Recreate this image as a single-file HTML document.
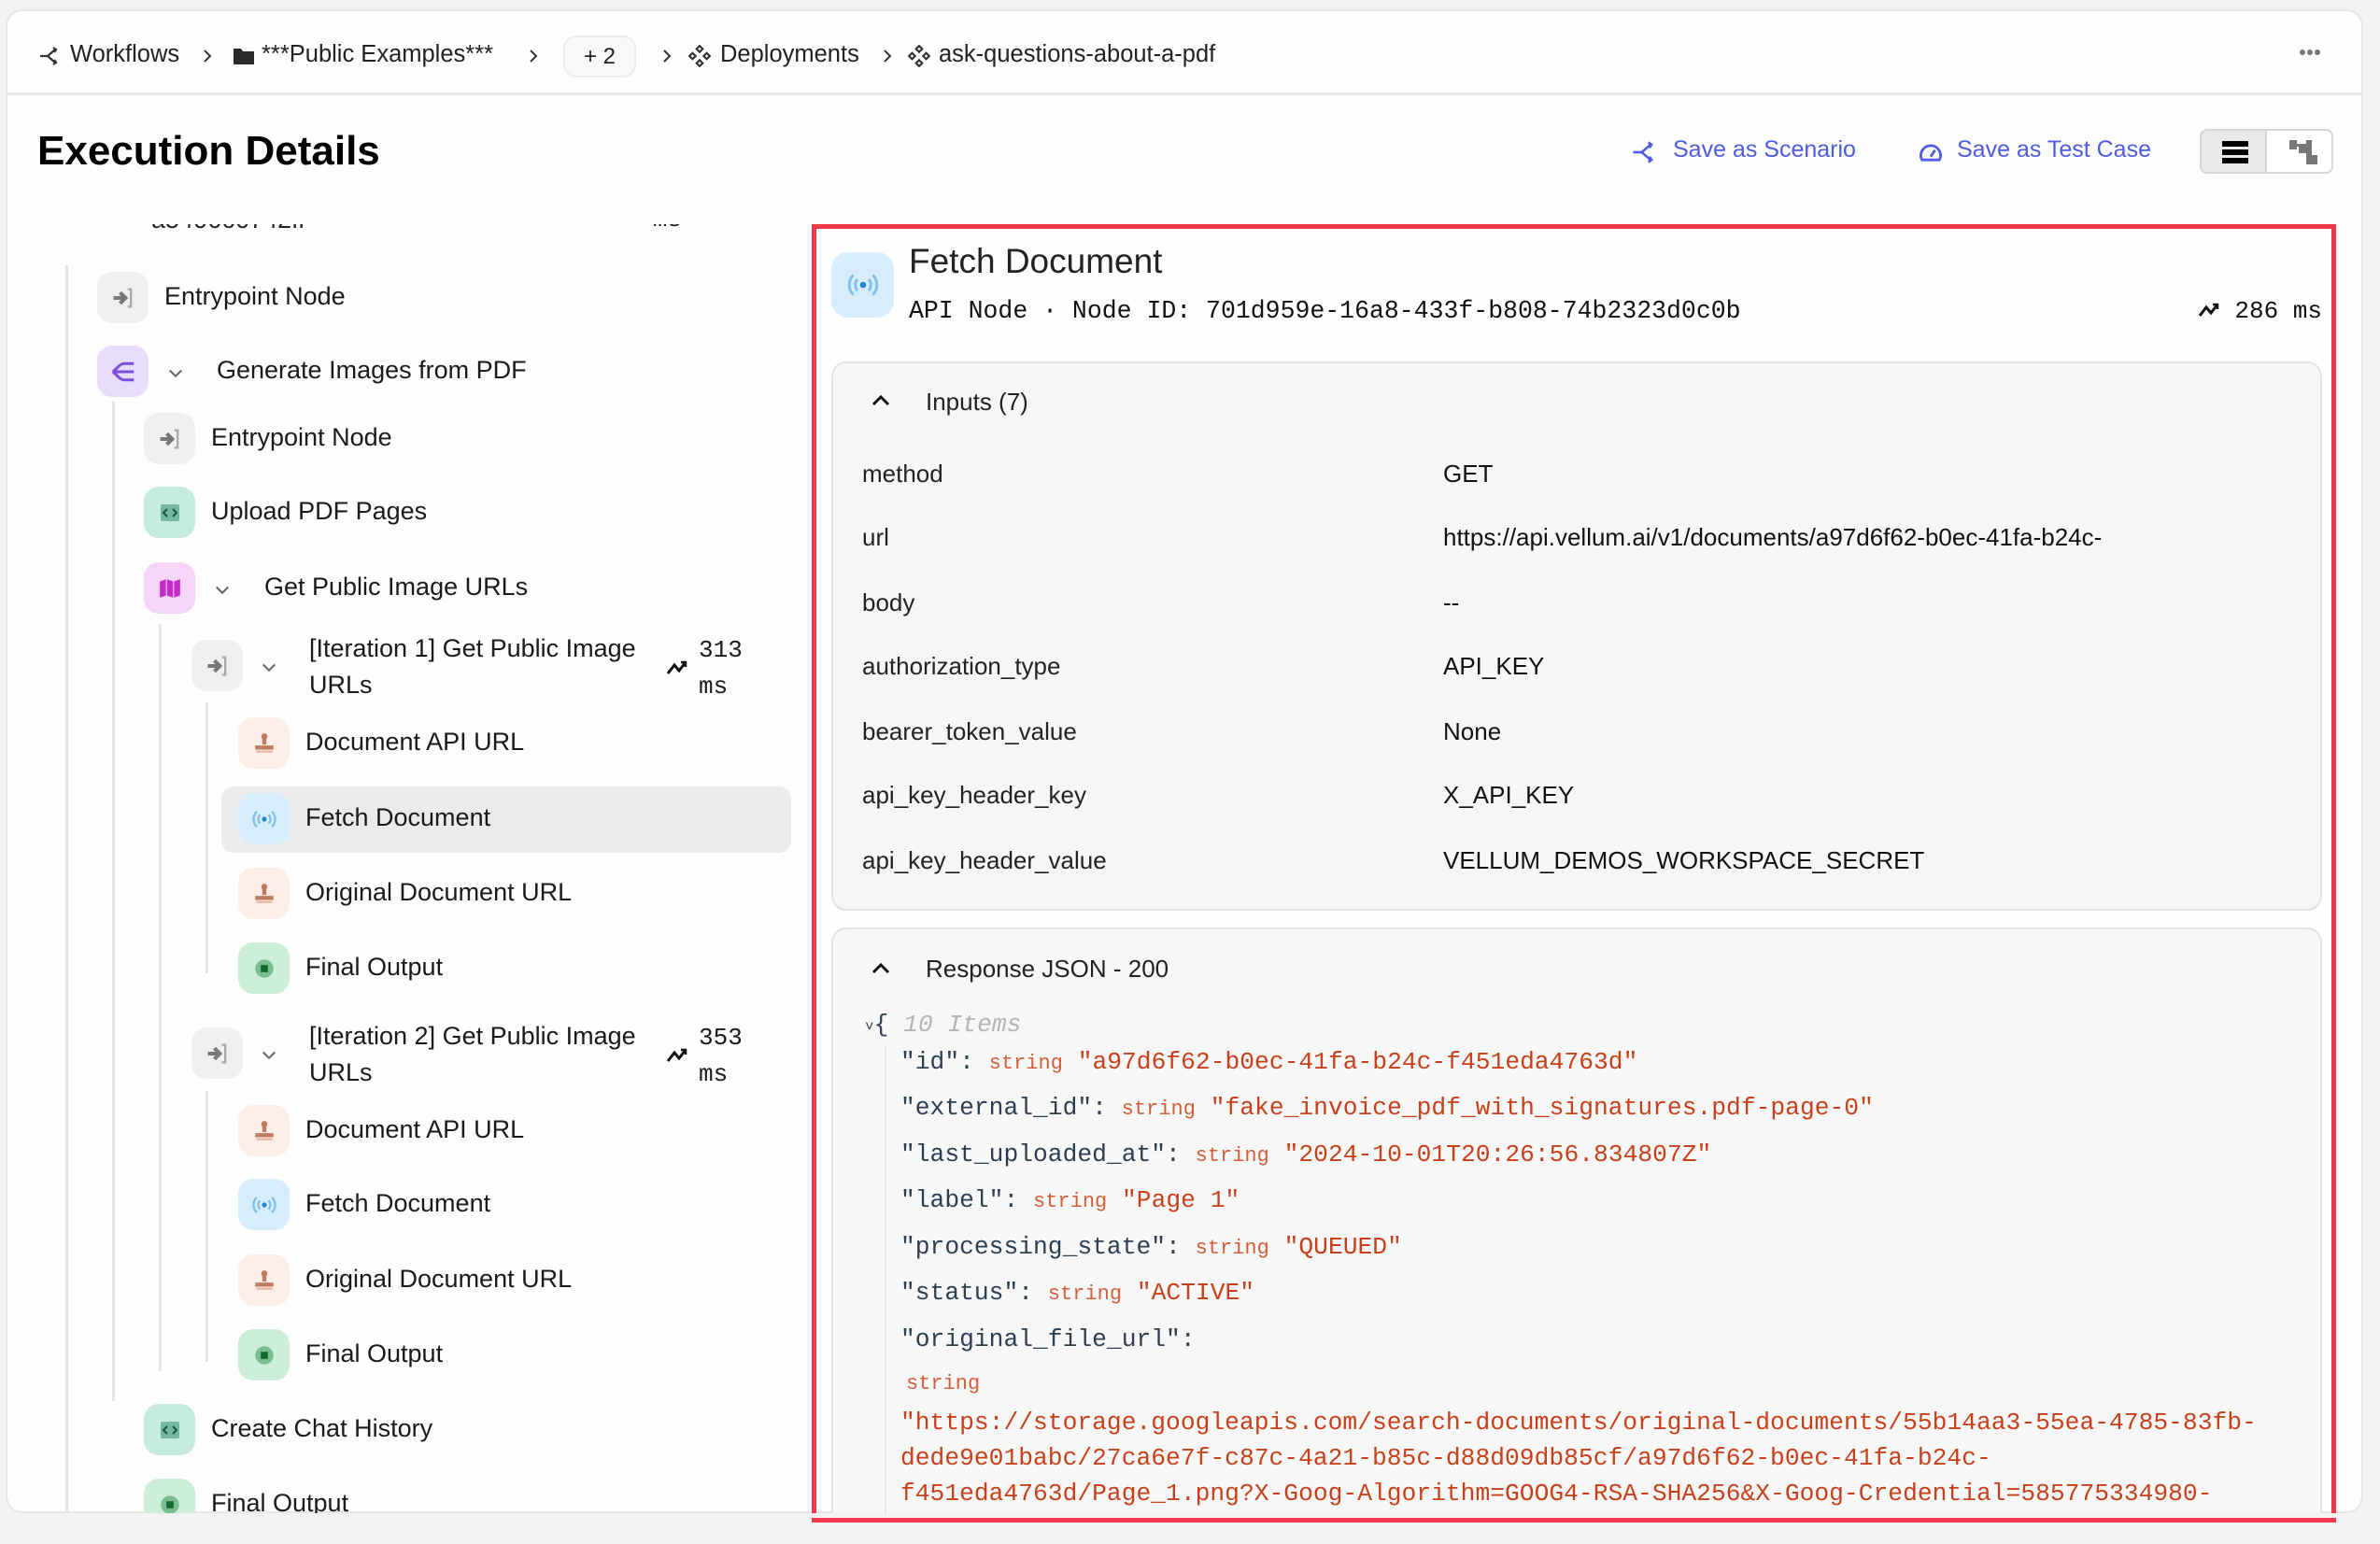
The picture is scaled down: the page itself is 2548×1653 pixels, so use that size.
<!DOCTYPE html>
<html><head><meta charset="utf-8">
<style>
*{box-sizing:border-box;margin:0;padding:0}
body{width:2548px;height:1638px;background:#f2f2f2;font-family:"Liberation Sans",sans-serif;color:#1a1a1a;position:relative;overflow:hidden}
.card{position:absolute;left:6px;top:10px;width:2524px;height:1610px;background:#fdfdfd;border:2px solid #e6e6e6;border-radius:18px;overflow:hidden}
.a{position:absolute;white-space:nowrap}
.bc{font-size:25.5px;color:#222;top:42px}
.ic{position:absolute;width:55px;height:55px;border-radius:16px;display:flex;align-items:center;justify-content:center}
.t{position:absolute;font-size:27px;color:#1a1a1a;white-space:nowrap}
.ms{position:absolute;font-family:"Liberation Mono",monospace;font-size:26px;color:#1a1a1a;white-space:nowrap;right:1718px;text-align:right}
.vl{position:absolute;width:3px;background:#e3e3e3}
.gray{background:#efefef}.pur{background:#e9ddfc}.teal{background:#c6ece1}.pink{background:#f7d5f8}.peach{background:#fcede7}.blue{background:#d7edfc}.green{background:#cdefd9}
.k{position:absolute;left:923px;font-size:26px;color:#222}
.v{position:absolute;left:1545px;font-size:26px;color:#111}
.j{position:absolute;font-family:"Liberation Mono",monospace;font-size:26.3px;color:#2c3e50;white-space:nowrap}
.ty{font-size:22px;color:#d35f3a}
.sv{color:#c7401a}
</style></head><body>
<svg width="0" height="0" style="position:absolute">
<defs>
<symbol id="trend" viewBox="0 0 24 24"><polyline points="2,19 9,10 14,16 21,7" fill="none" stroke="#111" stroke-width="3"/><polyline points="16,7 21,7 21,12" fill="none" stroke="#111" stroke-width="2.5"/></symbol>
<symbol id="chv" viewBox="0 0 16 16"><polyline points="3,6 8,11 13,6" fill="none" stroke="#666" stroke-width="1.6"/></symbol>
<symbol id="entry" viewBox="0 0 24 24"><path d="M3 12h9M9 7l5 5-5 5" fill="none" stroke="#777" stroke-width="3.5"/><path d="M16 4h3v16h-3" fill="none" stroke="#aaa" stroke-width="2"/></symbol>
<symbol id="gen" viewBox="0 0 24 24"><path d="M21 5h-8c-4 0-6 4-10 7M21 12H5M21 19h-8c-4 0-6-4-10-7" fill="none" stroke="#7c4ddb" stroke-width="2.4"/></symbol>
<symbol id="code" viewBox="0 0 24 24"><rect x="2" y="3" width="20" height="18" rx="2" fill="#75b79f"/><path d="M9 8l-4 4 4 4M15 8l4 4-4 4" fill="none" stroke="#0d5a3e" stroke-width="2"/></symbol>
<symbol id="map" viewBox="0 0 24 24"><path d="M2 5l6-2v16l-6 2zM9 3l6 2v16l-6-2zM16 5l6-2v16l-6 2z" fill="#c42cc9"/></symbol>
<symbol id="stamp" viewBox="0 0 24 24"><circle cx="12" cy="5" r="3" fill="#c07a5e"/><path d="M10 7h4v6h-4z" fill="#c07a5e"/><path d="M3 14h18v4H3z" fill="#c07a5e"/><rect x="4" y="19" width="16" height="2" fill="#e4b6a4"/></symbol>
<symbol id="api" viewBox="0 0 24 24"><circle cx="12" cy="12" r="2.2" fill="#1b87d6"/><path d="M8 8a6 6 0 0 0 0 8M16 8a6 6 0 0 1 0 8M5 5a10 10 0 0 0 0 14M19 5a10 10 0 0 1 0 14" fill="none" stroke="#7fc0ec" stroke-width="2"/></symbol>
<symbol id="fin" viewBox="0 0 24 24"><circle cx="12" cy="12" r="9" fill="#7bbd92"/><rect x="8.5" y="8.5" width="7" height="7" fill="#0f6a2c"/></symbol>
</defs></svg>

<div class="card">
<svg class="a" style="left:33px;top:36px" width="24" height="24" viewBox="0 0 24 24"><path d="M2 12h8M10 12l8-7M10 12l8 7M16 3l3 2-2 3M16 21l3-2-2-3" fill="none" stroke="#333" stroke-width="2.2"/></svg>
<div class="a bc" style="left:67px;top:32px">Workflows</div>
<svg class="a" style="left:206px;top:38px" width="16" height="20" viewBox="0 0 16 20"><polyline points="5,4 11,10 5,16" fill="none" stroke="#333" stroke-width="2"/></svg>
<svg class="a" style="left:241px;top:37px" width="24" height="22" viewBox="0 0 24 22"><path d="M1 3h8l2 3h12v14H1z" fill="#2a2a2a"/></svg>
<div class="a bc" style="left:272px;top:32px">***Public Examples***</div>
<svg class="a" style="left:555px;top:38px" width="16" height="20" viewBox="0 0 16 20"><polyline points="5,4 11,10 5,16" fill="none" stroke="#333" stroke-width="2"/></svg>
<div class="a" style="left:595px;top:26px;width:78px;height:45px;border:2px solid #ececec;background:#f8f8f8;border-radius:14px;font-size:24px;text-align:center;line-height:41px;color:#222">+ 2</div>
<svg class="a" style="left:698px;top:38px" width="16" height="20" viewBox="0 0 16 20"><polyline points="5,4 11,10 5,16" fill="none" stroke="#333" stroke-width="2"/></svg>
<svg class="a" style="left:728px;top:35px" width="26" height="26" viewBox="0 0 24 24"><path d="M12 2l3 3-3 3-3-3zM12 16l3 3-3 3-3-3zM2 12l3-3 3 3-3 3zM16 12l3-3 3 3-3 3z" fill="none" stroke="#333" stroke-width="2"/></svg>
<div class="a bc" style="left:763px;top:32px">Deployments</div>
<svg class="a" style="left:934px;top:38px" width="16" height="20" viewBox="0 0 16 20"><polyline points="5,4 11,10 5,16" fill="none" stroke="#333" stroke-width="2"/></svg>
<svg class="a" style="left:963px;top:35px" width="26" height="26" viewBox="0 0 24 24"><path d="M12 2l3 3-3 3-3-3zM12 16l3 3-3 3-3-3zM2 12l3-3 3 3-3 3zM16 12l3-3 3 3-3 3z" fill="none" stroke="#333" stroke-width="2"/></svg>
<div class="a bc" style="left:997px;top:32px">ask-questions-about-a-pdf</div>
<svg class="a" style="left:2453px;top:40px" width="24" height="8"><circle cx="4" cy="4" r="3" fill="#777"/><circle cx="12" cy="4" r="3" fill="#777"/><circle cx="20" cy="4" r="3" fill="#777"/></svg>
<div class="a" style="left:0;top:87px;width:2524px;height:3px;background:#e6e6e6"></div>

<div class="a" style="left:32px;top:125px;font-size:44px;font-weight:bold;color:#000">Execution Details</div>

<svg class="a" style="left:1738px;top:137px" width="28" height="28" viewBox="0 0 24 24"><path d="M2 12h8M10 12l8-7M10 12l8 7M16 3l3 2-2 3M16 21l3-2-2-3" fill="none" stroke="#4f5be0" stroke-width="2.2"/></svg>
<div class="a" style="left:1783px;top:134px;font-size:25px;color:#4f5be0">Save as Scenario</div>
<svg class="a" style="left:2045px;top:137px" width="28" height="28" viewBox="0 0 24 24"><path d="M4 19a9 9 0 1 1 16 0z" fill="none" stroke="#4f5be0" stroke-width="2.4"/><path d="M12 16l4-6" stroke="#4f5be0" stroke-width="2.4"/></svg>
<div class="a" style="left:2087px;top:134px;font-size:25px;color:#4f5be0">Save as Test Case</div>
<div class="a" style="left:2347px;top:126px;width:143px;height:48px;border:2px solid #d6d6d6;border-radius:8px;overflow:hidden;background:#fff">
 <div style="position:absolute;left:0;top:0;width:70px;height:46px;background:#e9e9e9;border-right:2px solid #d6d6d6"></div>
 <svg style="position:absolute;left:22px;top:10px" width="28" height="26"><rect x="0" y="1" width="28" height="6" fill="#000"/><rect x="0" y="10" width="28" height="6" fill="#000"/><rect x="0" y="19" width="28" height="6" fill="#000"/></svg>
 <svg style="position:absolute;left:94px;top:10px" width="30" height="28" viewBox="0 0 30 28"><rect x="0" y="0" width="8" height="10" fill="#777"/><rect x="10" y="6" width="8" height="8" fill="#777"/><rect x="18" y="0" width="6" height="24" fill="#777"/><rect x="18" y="16" width="12" height="10" fill="#777"/><rect x="6" y="4" width="14" height="3" fill="#777"/></svg>
</div>
</div>

<div class="a" style="left:6px;top:240px;width:854px;height:1380px;overflow:hidden">
<div class="a" style="left:-6px;top:-240px;width:860px;height:1620px">
 <div class="t" style="left:162px;top:220px;color:#222">a540660742ff</div>
 <div class="ms" style="right:130px;top:220px;">ms</div>
 <div class="vl" style="left:70px;top:284px;height:1340px"></div>
 <div class="vl" style="left:120px;top:430px;height:1070px"></div>
 <div class="vl" style="left:170px;top:668px;height:800px"></div>
 <div class="vl" style="left:220px;top:752px;height:290px"></div>
 <div class="vl" style="left:220px;top:1168px;height:290px"></div>

 <div class="ic gray" style="left:104px;top:291px"><svg width="28" height="28"><use href="#entry"/></svg></div>
 <div class="t" style="left:176px;top:302px">Entrypoint Node</div>
 <div class="ms" style="top:303px"><svg width="24" height="24" style="vertical-align:-3px"><use href="#trend"/></svg> 0 ms</div>

 <div class="ic pur" style="left:104px;top:370px"><svg width="30" height="30"><use href="#gen"/></svg></div>
 <svg class="a" style="left:178px;top:389px" width="20" height="20"><use href="#chv"/></svg>
 <div class="t" style="left:232px;top:381px">Generate Images from PDF</div>
 <div class="ms" style="top:382px"><svg width="24" height="24" style="vertical-align:-3px"><use href="#trend"/></svg> 5262 ms</div>

 <div class="ic gray" style="left:154px;top:442px"><svg width="28" height="28"><use href="#entry"/></svg></div>
 <div class="t" style="left:226px;top:453px">Entrypoint Node</div>
 <div class="ms" style="top:454px"><svg width="24" height="24" style="vertical-align:-3px"><use href="#trend"/></svg> 0 ms</div>

 <div class="ic teal" style="left:154px;top:521px"><svg width="24" height="24"><use href="#code"/></svg></div>
 <div class="t" style="left:226px;top:532px">Upload PDF Pages</div>
 <div class="ms" style="top:533px"><svg width="24" height="24" style="vertical-align:-3px"><use href="#trend"/></svg> 3701 ms</div>

 <div class="ic pink" style="left:154px;top:602px"><svg width="26" height="26"><use href="#map"/></svg></div>
 <svg class="a" style="left:228px;top:621px" width="20" height="20"><use href="#chv"/></svg>
 <div class="t" style="left:283px;top:613px">Get Public Image URLs</div>
 <div class="ms" style="top:614px"><svg width="24" height="24" style="vertical-align:-3px"><use href="#trend"/></svg> 411 ms</div>

 <div class="ic gray" style="left:205px;top:685px"><svg width="28" height="28"><use href="#entry"/></svg></div>
 <svg class="a" style="left:278px;top:704px" width="20" height="20"><use href="#chv"/></svg>
 <div class="t" style="left:331px;top:675px;line-height:39px;white-space:normal;width:380px">[Iteration 1] Get Public Image URLs</div>
 <svg class="a" style="left:713px;top:702px" width="24" height="24"><use href="#trend"/></svg>
 <div class="ms" style="left:748px;right:auto;top:677px;line-height:39px;text-align:left">313<br>ms</div>

 <div class="ic peach" style="left:255px;top:768px"><svg width="26" height="26"><use href="#stamp"/></svg></div>
 <div class="t" style="left:327px;top:779px">Document API URL</div>
 <div class="ms" style="top:780px"><svg width="24" height="24" style="vertical-align:-3px"><use href="#trend"/></svg> 1 ms</div>

 <div class="a" style="left:237px;top:842px;width:610px;height:71px;background:#ebebeb;border-radius:13px"></div>
 <div class="ic blue" style="left:255px;top:849px"><svg width="28" height="28"><use href="#api"/></svg></div>
 <div class="t" style="left:327px;top:860px">Fetch Document</div>
 <div class="ms" style="top:861px"><svg width="24" height="24" style="vertical-align:-3px"><use href="#trend"/></svg> 286 ms</div>

 <div class="ic peach" style="left:255px;top:929px"><svg width="26" height="26"><use href="#stamp"/></svg></div>
 <div class="t" style="left:327px;top:940px">Original Document URL</div>
 <div class="ms" style="top:941px"><svg width="24" height="24" style="vertical-align:-3px"><use href="#trend"/></svg> 1 ms</div>

 <div class="ic green" style="left:255px;top:1009px"><svg width="26" height="26"><use href="#fin"/></svg></div>
 <div class="t" style="left:327px;top:1020px">Final Output</div>
 <div class="ms" style="top:1021px"><svg width="24" height="24" style="vertical-align:-3px"><use href="#trend"/></svg> 1 ms</div>

 <div class="ic gray" style="left:205px;top:1100px"><svg width="28" height="28"><use href="#entry"/></svg></div>
 <svg class="a" style="left:278px;top:1119px" width="20" height="20"><use href="#chv"/></svg>
 <div class="t" style="left:331px;top:1090px;line-height:39px;white-space:normal;width:380px">[Iteration 2] Get Public Image URLs</div>
 <svg class="a" style="left:713px;top:1117px" width="24" height="24"><use href="#trend"/></svg>
 <div class="ms" style="left:748px;right:auto;top:1092px;line-height:39px;text-align:left">353<br>ms</div>

 <div class="ic peach" style="left:255px;top:1183px"><svg width="26" height="26"><use href="#stamp"/></svg></div>
 <div class="t" style="left:327px;top:1194px">Document API URL</div>
 <div class="ms" style="top:1195px"><svg width="24" height="24" style="vertical-align:-3px"><use href="#trend"/></svg> 1 ms</div>

 <div class="ic blue" style="left:255px;top:1262px"><svg width="28" height="28"><use href="#api"/></svg></div>
 <div class="t" style="left:327px;top:1273px">Fetch Document</div>
 <div class="ms" style="top:1274px"><svg width="24" height="24" style="vertical-align:-3px"><use href="#trend"/></svg> 305 ms</div>

 <div class="ic peach" style="left:255px;top:1343px"><svg width="26" height="26"><use href="#stamp"/></svg></div>
 <div class="t" style="left:327px;top:1354px">Original Document URL</div>
 <div class="ms" style="top:1355px"><svg width="24" height="24" style="vertical-align:-3px"><use href="#trend"/></svg> 1 ms</div>

 <div class="ic green" style="left:255px;top:1423px"><svg width="26" height="26"><use href="#fin"/></svg></div>
 <div class="t" style="left:327px;top:1434px">Final Output</div>
 <div class="ms" style="top:1435px"><svg width="24" height="24" style="vertical-align:-3px"><use href="#trend"/></svg> 0 ms</div>

 <div class="ic teal" style="left:154px;top:1503px"><svg width="24" height="24"><use href="#code"/></svg></div>
 <div class="t" style="left:226px;top:1514px">Create Chat History</div>
 <div class="ms" style="top:1515px"><svg width="24" height="24" style="vertical-align:-3px"><use href="#trend"/></svg> 954 ms</div>

 <div class="ic green" style="left:154px;top:1583px"><svg width="26" height="26"><use href="#fin"/></svg></div>
 <div class="t" style="left:226px;top:1594px">Final Output</div>
 <div class="ms" style="top:1595px"><svg width="24" height="24" style="vertical-align:-3px"><use href="#trend"/></svg> 0 ms</div>
</div>
</div>

<div class="a" style="left:869px;top:240px;width:1632px;height:1392px;border:5px solid #f43a4a"></div>
<div class="a" style="left:874px;top:245px;width:1622px;height:1375px;overflow:hidden">
 <div class="ic blue" style="left:16px;top:25px;width:67px;height:70px;border-radius:18px"><svg width="36" height="36"><use href="#api"/></svg></div>
 <div class="a" style="left:99px;top:14px;font-size:37px;color:#222">Fetch Document</div>
 <div class="a" style="left:99px;top:73px;font-family:'Liberation Mono',monospace;font-size:26.5px;color:#111">API Node · Node ID: 701d959e-16a8-433f-b808-74b2323d0c0b</div>
 <div class="a" style="right:10px;top:73px;font-family:'Liberation Mono',monospace;font-size:26px;color:#111"><svg width="24" height="24" style="vertical-align:-3px"><use href="#trend"/></svg> 286 ms</div>

 <div class="a" style="left:16px;top:142px;width:1596px;height:588px;background:#f6f6f6;border:2px solid #e2e2e2;border-radius:16px"></div>
 <svg class="a" style="left:58px;top:176px" width="22" height="16"><polyline points="3,12 11,4 19,12" fill="none" stroke="#111" stroke-width="3"/></svg>
 <div class="a" style="left:117px;top:170px;font-size:26px;color:#222">Inputs (7)</div>
</div>
<div class="k" style="top:492px">method</div><div class="v" style="top:492px">GET</div>
<div class="k" style="top:560px">url</div><div class="v" style="top:560px">https://api.vellum.ai/v1/documents/a97d6f62-b0ec-41fa-b24c-</div>
<div class="k" style="top:630px">body</div><div class="v" style="top:630px">--</div>
<div class="k" style="top:698px">authorization_type</div><div class="v" style="top:698px">API_KEY</div>
<div class="k" style="top:768px">bearer_token_value</div><div class="v" style="top:768px">None</div>
<div class="k" style="top:836px">api_key_header_key</div><div class="v" style="top:836px">X_API_KEY</div>
<div class="k" style="top:906px">api_key_header_value</div><div class="v" style="top:906px">VELLUM_DEMOS_WORKSPACE_SECRET</div>

<div class="a" style="left:890px;top:993px;width:1596px;height:660px;background:#f7f7f7;border:2px solid #e2e2e2;border-radius:16px;clip-path:inset(0 0 33px 0)"></div>
<svg class="a" style="left:932px;top:1029px" width="22" height="16"><polyline points="3,12 11,4 19,12" fill="none" stroke="#111" stroke-width="3"/></svg>
<div class="a" style="left:991px;top:1022px;font-size:26px;color:#222">Response JSON - 200</div>
<div class="a" style="left:947px;top:1120px;width:2px;height:500px;background:#e8e8e8"></div>
<div class="j" style="left:926px;top:1082px;color:#2c3e50"><span style="font-size:16px">˅</span>{ <i style="color:#b5b5b5">10 Items</i></div>
<div class="j" style="left:964px;top:1122px">"id": <span class="ty">string</span> <span class="sv">"a97d6f62-b0ec-41fa-b24c-f451eda4763d"</span></div>
<div class="j" style="left:964px;top:1171px">"external_id": <span class="ty">string</span> <span class="sv">"fake_invoice_pdf_with_signatures.pdf-page-0"</span></div>
<div class="j" style="left:964px;top:1221px">"last_uploaded_at": <span class="ty">string</span> <span class="sv">"2024-10-01T20:26:56.834807Z"</span></div>
<div class="j" style="left:964px;top:1270px">"label": <span class="ty">string</span> <span class="sv">"Page 1"</span></div>
<div class="j" style="left:964px;top:1320px">"processing_state": <span class="ty">string</span> <span class="sv">"QUEUED"</span></div>
<div class="j" style="left:964px;top:1369px">"status": <span class="ty">string</span> <span class="sv">"ACTIVE"</span></div>
<div class="j" style="left:964px;top:1419px">"original_file_url":</div>
<div class="j" style="left:970px;top:1465px"><span class="ty">string</span></div>
<div class="j sv" style="left:964px;top:1508px;color:#c7401a">"https://storage.googleapis.com/search-documents/original-documents/55b14aa3-55ea-4785-83fb-</div>
<div class="j sv" style="left:964px;top:1546px;color:#c7401a">dede9e01babc/27ca6e7f-c87c-4a21-b85c-d88d09db85cf/a97d6f62-b0ec-41fa-b24c-</div>
<div class="j sv" style="left:964px;top:1584px;color:#c7401a">f451eda4763d/Page_1.png?X-Goog-Algorithm=GOOG4-RSA-SHA256&amp;X-Goog-Credential=585775334980-</div>

<div class="a" style="left:0;top:1620px;width:2548px;height:18px;background:#f2f2f2"></div>
<div class="a" style="left:869px;top:1625px;width:1632px;height:5px;background:#f43a4a"></div>
<div class="a" style="left:2530px;top:0;width:18px;height:1638px;background:#f2f2f2"></div>
</body></html>
